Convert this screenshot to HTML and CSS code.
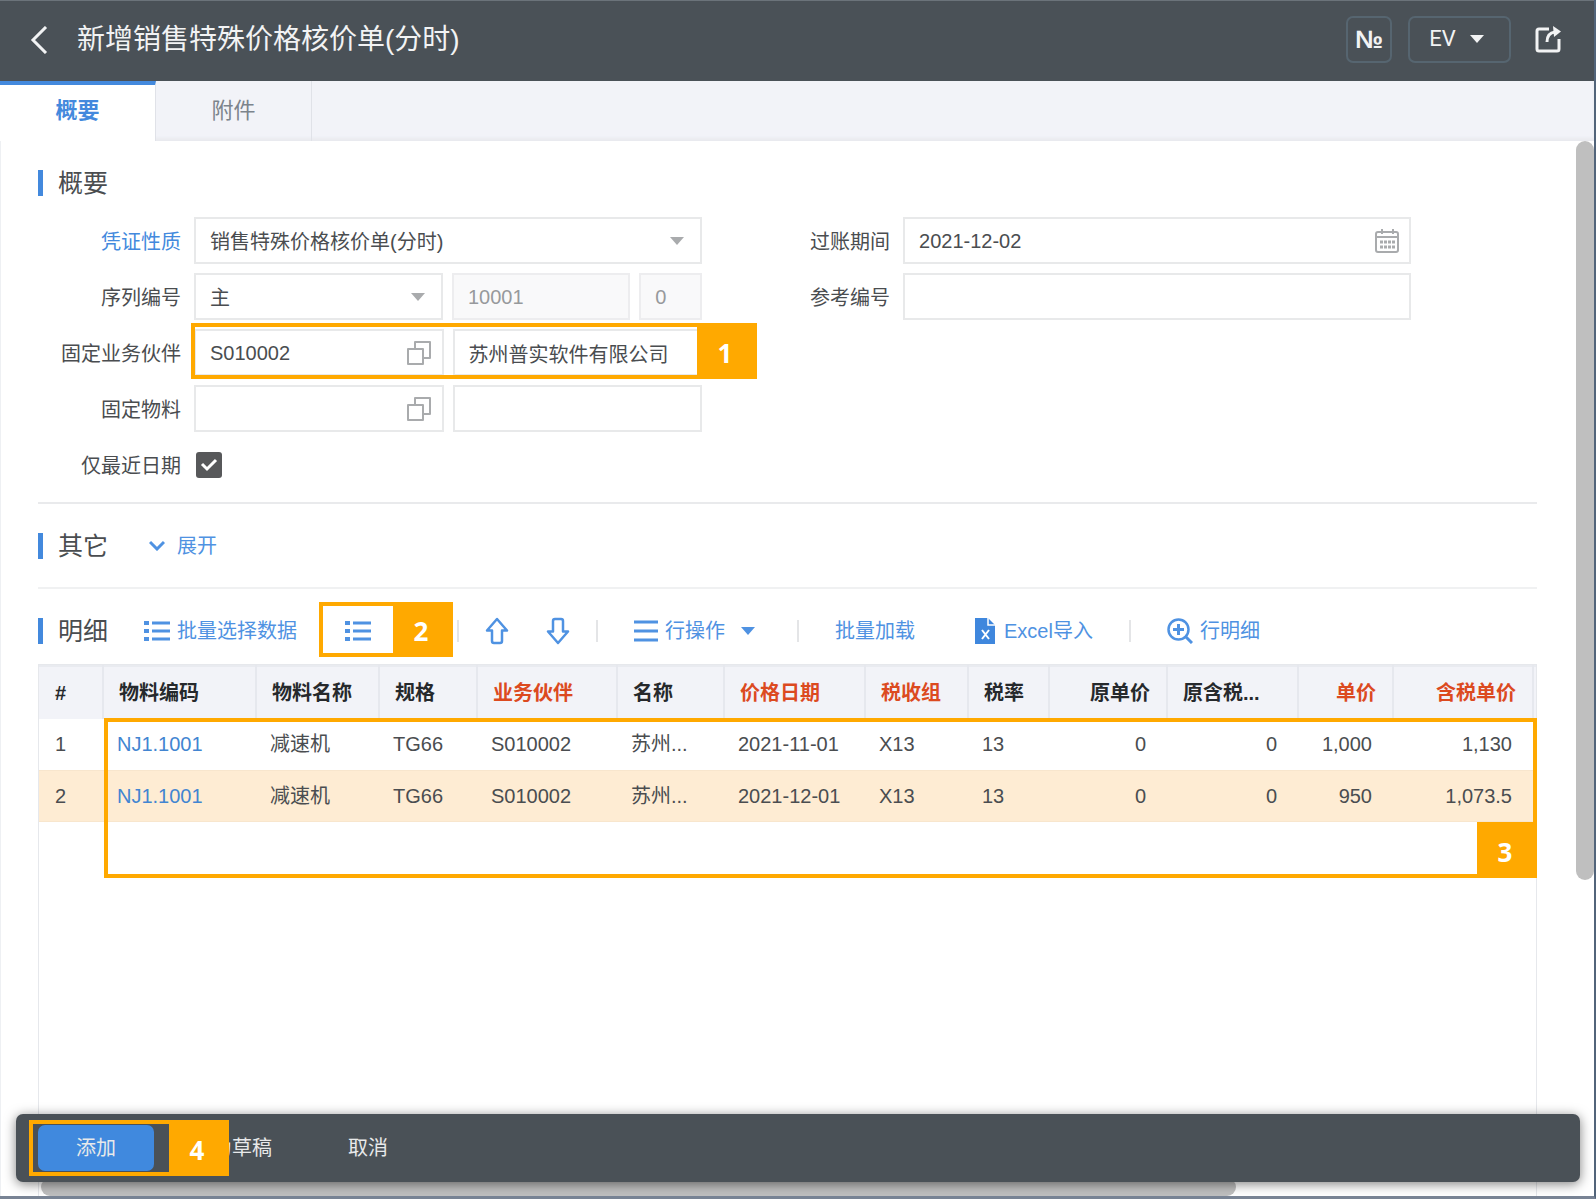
FILE: index.html
```html
<!DOCTYPE html>
<html lang="zh-CN">

<head>
    <meta charset="UTF-8">
    <meta name="viewport" content="width=device-width, initial-scale=1.0">
    <title>新增销售特殊价格核价单(分时)</title>
    <link rel="stylesheet" href="styles.css">
</head>

<body>
    <svg class="sprite" aria-hidden="true">
        <symbol id="icon-list" viewBox="0 0 26 22">
            <path d="M0 1h5v4H0zM0 9h5v4H0zM0 17h5v4H0z" fill="currentColor" />
            <path d="M8 3h18M8 11h18M8 19h18" stroke="currentColor" stroke-width="3" />
        </symbol>
        <symbol id="icon-caret" viewBox="0 0 14 8">
            <path d="M0 0h14L7 8z" fill="currentColor" />
        </symbol>
        <symbol id="icon-copy" viewBox="0 0 26 26">
            <path d="M9 8V2h15v16h-7M2 9h15v15H2z" fill="none" stroke="currentColor" stroke-width="2" stroke-linejoin="round" />
        </symbol>
        <symbol id="icon-arrow" viewBox="0 0 24 28">
            <path d="M12 2L22 13.500H17V24q0 2-2 2H9q-2 0-2-2V13.500H2z" fill="none" stroke="currentColor" stroke-width="2.500" stroke-linejoin="round" />
        </symbol>
    </svg>

    <div class="app">
        <header class="topbar">
            <button type="button" class="back" aria-label="返回">
                <svg width="18" height="28" viewBox="0 0 18 28"><path d="M16 1L3 14l13 13" fill="none" stroke="currentColor" stroke-width="3" /></svg>
            </button>
            <h1>新增销售特殊价格核价单(分时)</h1>
            <div class="topbar-actions">
                <button type="button" class="top-btn num-btn">№</button>
                <button type="button" class="top-btn user-btn">EV <svg width="14" height="8"><use href="#icon-caret" /></svg></button>
                <button type="button" class="share" aria-label="打开">
                    <svg width="27" height="27" viewBox="0 0 27 27">
                        <path d="M14 3H4Q2 3 2 5v18q0 2 2 2h18q2 0 2-2V13" fill="none" stroke="currentColor" stroke-width="3" />
                        <path d="M12 16q0-9 8-10" fill="none" stroke="currentColor" stroke-width="3" />
                        <path d="M18 0L26 5.500 19 11z" fill="currentColor" />
                    </svg>
                </button>
            </div>
        </header>

        <nav class="tabs">
            <a href="#summary" class="tab active">概要</a>
            <a href="#files" class="tab">附件</a>
        </nav>

        <main class="content">
            <section id="summary" class="summary">
                <h2>概要</h2>
                <div class="form-grid">
                    <label for="docType" class="link">凭证性质</label>
                    <div class="field">
                        <select id="docType">
                            <option>销售特殊价格核价单(分时)</option>
                        </select>
                        <svg class="caret" width="14" height="8"><use href="#icon-caret" /></svg>
                    </div>
                    <label for="postDate">过账期间</label>
                    <div class="field">
                        <input type="text" id="postDate" value="2021-12-02">
                        <svg class="field-icon" width="24" height="24" viewBox="0 0 24 24">
                            <rect x="1" y="3" width="22" height="20" rx="2" fill="none" stroke="currentColor" stroke-width="2" />
                            <path d="M1 8h22M7 0v5M18 0v5" stroke="currentColor" stroke-width="2" />
                            <path d="M5 13h15M5 18h15" stroke="currentColor" stroke-width="3" stroke-dasharray="3 1" />
                        </svg>
                    </div>

                    <label for="series" class="new-row">序列编号</label>
                    <div class="field-group series">
                        <div class="field">
                            <select id="series">
                                <option>主</option>
                            </select>
                            <svg class="caret" width="14" height="8"><use href="#icon-caret" /></svg>
                        </div>
                        <input type="text" value="10001" aria-label="编号" disabled>
                        <input type="text" value="0" aria-label="版本" disabled>
                    </div>
                    <label for="refNo">参考编号</label>
                    <div class="field">
                        <input type="text" id="refNo">
                    </div>

                    <label for="partner" class="new-row">固定业务伙伴</label>
                    <div class="field-group">
                        <div class="field">
                            <input type="text" id="partner" value="S010002">
                            <svg class="field-icon" width="26" height="26"><use href="#icon-copy" /></svg>
                        </div>
                        <input type="text" value="苏州普实软件有限公司" aria-label="业务伙伴名称">
                        <div class="mark mark-partner"><span>1</span></div>
                    </div>

                    <label for="item" class="new-row">固定物料</label>
                    <div class="field-group">
                        <div class="field">
                            <input type="text" id="item">
                            <svg class="field-icon" width="26" height="26"><use href="#icon-copy" /></svg>
                        </div>
                        <input type="text" aria-label="物料名称">
                    </div>

                    <label for="latest" class="new-row">仅最近日期</label>
                    <div class="check">
                        <input type="checkbox" id="latest" checked>
                        <svg class="tick" width="18" height="14" viewBox="0 0 18 14"><path d="M2 6l5 5 9-9" fill="none" stroke="currentColor" stroke-width="3" /></svg>
                    </div>
                </div>
            </section>

            <section class="other">
                <h2>其它</h2>
                <button type="button" class="tool">
                    <svg width="16" height="11" viewBox="0 0 16 11"><path d="M1 2l7 7 7-7" fill="none" stroke="currentColor" stroke-width="3" /></svg>
                    展开
                </button>
            </section>

            <section class="details">
                <div class="toolbar">
                    <h2>明细</h2>
                    <button type="button" class="tool"><svg width="26" height="22"><use href="#icon-list" /></svg>批量选择数据</button>
                    <div class="list-tool">
                        <button type="button" class="tool" aria-label="列表"><svg width="26" height="22"><use href="#icon-list" /></svg></button>
                        <div class="mark mark-list"><span>2</span></div>
                    </div>
                    <i class="sep"></i>
                    <div class="arrows">
                        <button type="button" class="tool" aria-label="上移"><svg width="24" height="28"><use href="#icon-arrow" /></svg></button>
                        <button type="button" class="tool" aria-label="下移"><svg class="down" width="24" height="28"><use href="#icon-arrow" /></svg></button>
                    </div>
                    <i class="sep"></i>
                    <button type="button" class="tool row-menu">
                        <svg width="24" height="22" viewBox="0 0 24 22"><path d="M0 2h24M0 11h24M0 20h24" stroke="currentColor" stroke-width="3" /></svg>
                        行操作
                        <svg class="menu-caret" width="14" height="8"><use href="#icon-caret" /></svg>
                    </button>
                    <i class="sep"></i>
                    <button type="button" class="tool">批量加载</button>
                    <button type="button" class="tool excel">
                        <svg width="20" height="26" viewBox="0 0 20 26">
                            <path d="M0 0h13l7 7v19H0z" fill="#3f87dd" />
                            <path d="M13 0v7h7" fill="none" stroke="#fff" stroke-width="1.500" />
                            <path d="M7 12l7 9M14 12l-7 9" stroke="#fff" stroke-width="2" />
                        </svg>
                        Excel导入
                    </button>
                    <i class="sep"></i>
                    <button type="button" class="tool">
                        <svg width="26" height="26" viewBox="0 0 26 26">
                            <circle cx="11.500" cy="11.500" r="10" fill="none" stroke="currentColor" stroke-width="2.500" />
                            <path d="M11.500 6v11M6 11.500h11M18 18l7 7" stroke="currentColor" stroke-width="3" />
                        </svg>
                        行明细
                    </button>
                </div>

                <div class="table-box">
                    <table>
                        <colgroup>
                            <col class="w-no"><col class="w-code"><col class="w-name"><col class="w-spec"><col class="w-partner"><col class="w-short"><col class="w-date"><col class="w-group"><col class="w-rate"><col class="w-old"><col class="w-oldtax"><col class="w-price"><col class="w-taxprice"><col>
                        </colgroup>
                        <thead>
                            <tr>
                                <th>#</th>
                                <th>物料编码</th>
                                <th>物料名称</th>
                                <th>规格</th>
                                <th class="required">业务伙伴</th>
                                <th>名称</th>
                                <th class="required">价格日期</th>
                                <th class="required">税收组</th>
                                <th>税率</th>
                                <th class="num">原单价</th>
                                <th>原含税...</th>
                                <th class="num required">单价</th>
                                <th class="num required">含税单价</th>
                                <th></th>
                            </tr>
                        </thead>
                        <tbody>
                            <tr>
                                <td>1</td>
                                <td><a href="#">NJ1.1001</a></td>
                                <td>减速机</td>
                                <td>TG66</td>
                                <td>S010002</td>
                                <td>苏州...</td>
                                <td>2021-11-01</td>
                                <td>X13</td>
                                <td>13</td>
                                <td class="num">0</td>
                                <td class="num">0</td>
                                <td class="num">1,000</td>
                                <td class="num">1,130</td>
                                <td></td>
                            </tr>
                            <tr class="selected">
                                <td>2</td>
                                <td><a href="#">NJ1.1001</a></td>
                                <td>减速机</td>
                                <td>TG66</td>
                                <td>S010002</td>
                                <td>苏州...</td>
                                <td>2021-12-01</td>
                                <td>X13</td>
                                <td>13</td>
                                <td class="num">0</td>
                                <td class="num">0</td>
                                <td class="num">950</td>
                                <td class="num">1,073.5</td>
                                <td></td>
                            </tr>
                        </tbody>
                    </table>
                    <div class="mark mark-rows"><span>3</span></div>
                </div>
            </section>
            <div class="scroll-y"></div>
            <div class="scroll-x"></div>
        </main>

        <footer class="actions">
            <button type="button" class="primary">添加</button>
            <button type="button" class="draft">为草稿</button>
            <button type="button">取消</button>
            <div class="mark mark-add"><span>4</span></div>
        </footer>
    </div>
</body>

</html>
```
FILE: styles.css
```css
* {
    box-sizing: border-box;
}

body {
    margin: 0;
    font-family: "Liberation Sans", "Noto Sans CJK SC", sans-serif;
    font-size: 20px;
    line-height: 28px;
    color: #4a4d50;
    background: #fff;
}

button,
input,
select {
    font: inherit;
    color: inherit;
}

button {
    padding: 0;
    border: 0;
    background: none;
    cursor: pointer;
}

a {
    color: #4285d1;
    text-decoration: none;
}

svg {
    flex: none;
    display: block;
}

.sprite {
    position: absolute;
    width: 0;
    height: 0;
}

.app {
    position: relative;
    display: flex;
    flex-direction: column;
    min-height: 100vh;
    overflow: hidden;
    border-right: 2px solid #52647a;
    border-bottom: 3px solid #788394;
}

/* top bar */
.topbar {
    display: flex;
    align-items: center;
    height: 81px;
    padding: 0 32px 2px 30px;
    border-top: 1px solid #6b737a;
    background: #4a5157;
    color: #f2f3f4;
}

h1 {
    flex: 1;
    margin: 0 0 0 29px;
    font-size: 28px;
    line-height: 40px;
    font-weight: normal;
}

.topbar-actions {
    display: flex;
    align-items: center;
    gap: 16px;
    padding-bottom: 2px;
}

.top-btn {
    display: flex;
    align-items: center;
    justify-content: center;
    gap: 14px;
    height: 47px;
    border: 2px solid #566570;
    border-radius: 7px;
}

.num-btn {
    width: 46px;
    font-size: 25px;
    font-weight: bold;
}

.user-btn {
    width: 103px;
    padding-right: 6px;
    font-family: Roboto, sans-serif;
    font-size: 22px;
}

.share {
    margin-left: 8px;
}

/* tabs */
.tabs {
    display: flex;
    height: 60px;
    background: #f2f3f8;
    box-shadow: inset 0 -3px 3px #e9eaef;
}

.tab {
    width: 156px;
    padding-top: 16px;
    border-right: 1px solid #e0e2e8;
    font-size: 22px;
    text-align: center;
    color: #7c848c;
}

.tab.active {
    padding-top: 12px;
    border-top: 4px solid #4389dd;
    background: #fff;
    font-weight: bold;
    color: #4389dd;
}

/* page */
.content {
    position: relative;
    flex: 1;
    display: flex;
    flex-direction: column;
    padding: 24px 57px 0 37px;
    border-left: 1px solid #eef0f3;
}

h2 {
    display: flex;
    align-items: center;
    gap: 15px;
    margin: 0;
    font-size: 25px;
    line-height: 36px;
    font-weight: normal;
}

h2::before {
    content: "";
    width: 5px;
    height: 26px;
    background: #4389dd;
}

.summary {
    padding-bottom: 14px;
    border-bottom: 2px solid #e9eaec;
}

.form-grid {
    display: grid;
    grid-template-columns: 143px 9fr 175px 9fr 2fr;
    gap: 9px 13px;
    align-items: center;
    margin-top: 16px;
}

.form-grid > label {
    padding-top: 2px;
    text-align: right;
}

.form-grid > .new-row {
    grid-column: 1;
}

.link {
    color: #4389dd;
}

.field {
    position: relative;
}

.field-group {
    position: relative;
    display: grid;
    grid-template-columns: 1fr 1fr;
    gap: 9px;
}

.series {
    grid-template-columns: 250fr 179fr 63fr;
}

input[type="text"],
select {
    display: block;
    width: 100%;
    min-width: 0;
    height: 47px;
    padding: 2px 14px 0;
    border: 2px solid #e8e9ea;
    border-radius: 0;
    background: #fff;
    appearance: none;
}

input[type="text"]:disabled {
    border-color: #ededef;
    background: #f9f9fa;
    color: #97999c;
}

.caret,
.field-icon {
    position: absolute;
    right: 18px;
    top: 50%;
    transform: translateY(-50%);
    color: #a9abad;
    pointer-events: none;
}

.field-icon {
    right: 12px;
}

.check {
    position: relative;
    display: flex;
    align-items: center;
    height: 47px;
}

.check input {
    width: 26px;
    height: 26px;
    margin: 0 2px;
    border-radius: 3px;
    background: #57585a;
    appearance: none;
}

.tick {
    position: absolute;
    left: 6px;
    color: #fff;
    pointer-events: none;
}

.other {
    display: flex;
    align-items: center;
    gap: 41px;
    height: 85px;
    border-bottom: 2px solid #f0f1f2;
}

.tool {
    display: flex;
    align-items: center;
    gap: 7px;
    color: #4f92e2;
}

.other .tool {
    gap: 12px;
}

.toolbar {
    display: flex;
    align-items: center;
    height: 75px;
    padding-top: 8px;
    white-space: nowrap;
}

.toolbar h2 {
    margin-right: 36px;
}

.list-tool {
    position: relative;
    margin: 0 50px 0 48px;
}

.sep {
    width: 2px;
    height: 22px;
    margin: 0 36px;
    background: #e4e5e7;
}

.arrows {
    display: flex;
    gap: 37px;
    margin: 0 -10px;
}

.down {
    transform: rotate(180deg);
}

.row-menu {
    margin-right: 6px;
}

.menu-caret {
    margin-left: 9px;
}

.excel {
    gap: 9px;
    margin-left: 60px;
}

/* table */
.details {
    flex: 1;
    display: flex;
    flex-direction: column;
}

.table-box {
    position: relative;
    flex: 1;
    border: 1px solid #e6e8ec;
    border-bottom: 0;
}

table {
    width: 100%;
    table-layout: fixed;
    border-collapse: collapse;
}

th,
td {
    padding: 0 14px;
    text-align: left;
    white-space: nowrap;
    overflow: hidden;
}

th {
    height: 54px;
    padding: 2px 16px 0 15px;
    border-right: 2px solid #e6e8ee;
    background: #f2f3f8;
    box-shadow: inset 0 2px #e9ebf0;
    color: #26292c;
}

th:last-child {
    padding: 0;
    border-right: 0;
}

td {
    height: 51px;
}

th:first-child,
td:first-child {
    padding-left: 16px;
}

td.num {
    padding-right: 21px;
}

.num {
    text-align: right;
}

.required {
    color: #dc4a1f;
}

.selected td {
    background: #feecd3;
    border-top: 1px solid #f8e6cd;
    border-bottom: 1px solid #f8e6cd;
}

.w-no { width: 64px; }
.w-code { width: 153px; }
.w-name { width: 123px; }
.w-spec { width: 98px; }
.w-partner { width: 140px; }
.w-short { width: 107px; }
.w-date { width: 141px; }
.w-group { width: 103px; }
.w-rate { width: 81px; }
.w-old { width: 118px; }
.w-oldtax { width: 131px; }
.w-price { width: 95px; }
.w-taxprice { width: 140px; }

/* numbered step marks */
.mark {
    position: absolute;
    display: flex;
    justify-content: flex-end;
    border: 4px solid #ffa900;
    pointer-events: none;
}

.mark span {
    display: flex;
    align-items: center;
    justify-content: center;
    width: 56px;
    padding-top: 3px;
    background: #ffa900;
    color: #fff;
    font-family: "Noto Sans", sans-serif;
    font-size: 26px;
    font-weight: bold;
}

.mark-partner {
    top: -6px;
    right: -55px;
    bottom: -3px;
    left: -3px;
}

.mark-list {
    top: -18px;
    left: -26px;
    width: 134px;
    height: 55px;
}

.mark-rows {
    top: 53px;
    left: 65px;
    right: -1px;
    height: 160px;
}

.mark-rows span {
    height: 52px;
    padding-top: 8px;
    align-self: flex-end;
}

.mark-add {
    top: 6px;
    left: 13px;
    width: 200px;
    height: 56px;
}

/* scroll bars */
.scroll-y,
.scroll-x {
    position: absolute;
    border-radius: 9px;
    background: #bfbfbf;
}

.scroll-y {
    top: 0;
    right: 0;
    width: 18px;
    height: 70%;
}

.scroll-x {
    left: 40px;
    bottom: 0;
    width: 75%;
    height: 18px;
}

/* bottom bar */
.actions {
    position: absolute;
    left: 16px;
    right: 14px;
    bottom: 14px;
    display: flex;
    align-items: center;
    height: 68px;
    padding: 0 22px;
    border-radius: 7px;
    background: #4a5157;
    box-shadow: 0 2px 12px rgba(0, 0, 0, 0.5);
    color: #e8e9ea;
}

.actions button {
    height: 46px;
    padding: 0 38px;
    border-radius: 7px;
}

.actions .primary {
    background: #4089de;
}

.actions .draft {
    width: 156px;
    text-align: right;
}
```
